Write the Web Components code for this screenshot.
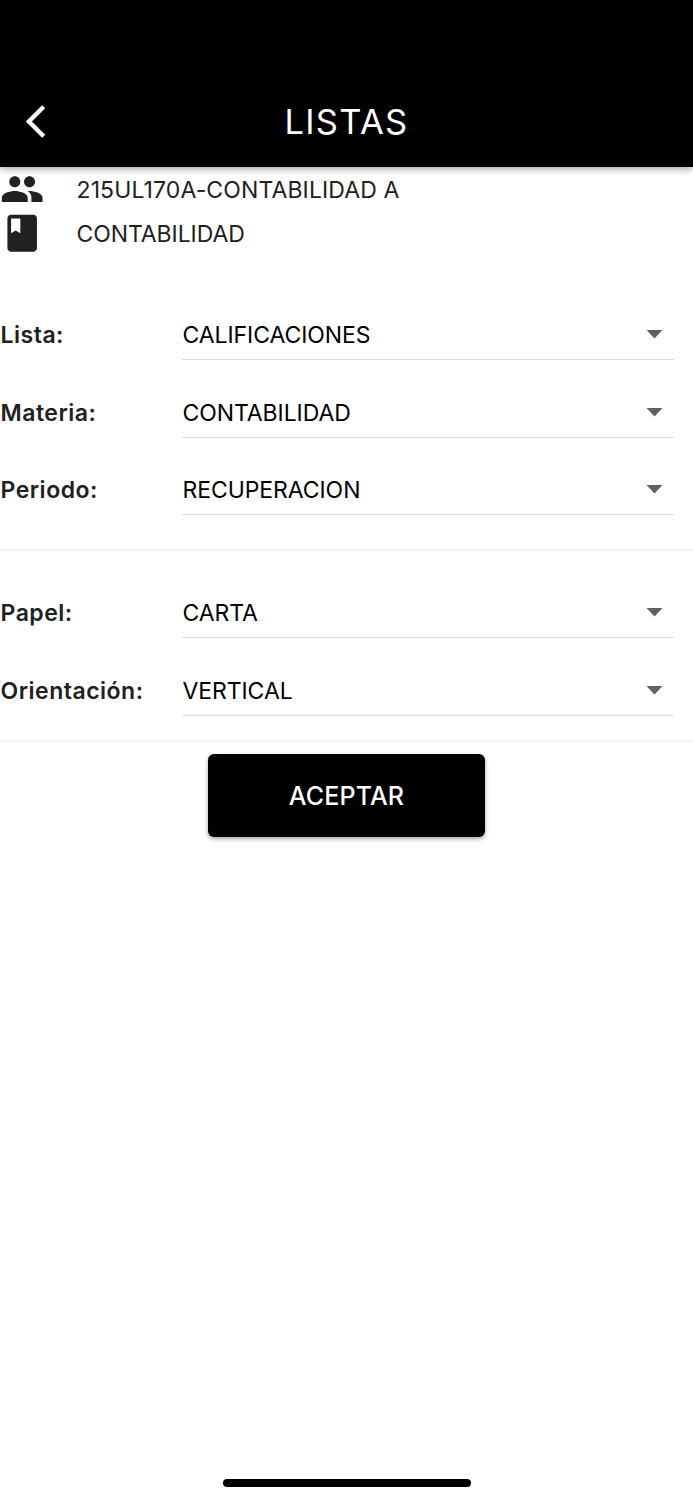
<!DOCTYPE html>
<html lang="es">
<head>
<meta charset="utf-8">
<title>Listas</title>
<style>
html,body{margin:0;height:100%}
body{font-family:Inter,"Liberation Sans",sans-serif;background:#fff;color:#212121}
</style>
</head>
<body>
<listas-page></listas-page>
<script>
const define = (name, html) => customElements.define(name, class extends HTMLElement {
  constructor() {
    super();
    const t = document.createElement('template');
    t.innerHTML = html;
    this.attachShadow({ mode: 'open' }).append(t.content.cloneNode(true));
  }
});

define('app-header', `<style>
:host{display:grid;grid-template-columns:1fr auto 1fr;align-items:center;box-sizing:border-box;height:167px;padding:76px 0 0;background:#000;color:#fff;box-shadow:0 2px 7px rgba(0,0,0,.38);position:relative}
svg{display:block;margin-left:26px;fill:#fff;stroke:#fff;stroke-width:.3}
h1{margin:0;font-size:34.5px;line-height:44px;font-weight:400;letter-spacing:1.3px}
</style>
<svg width="19.4" height="39" viewBox="0 0 11.94 24"><path d="M11.67 3.87 9.9 2.1 0 12l9.9 9.9 1.77-1.77L3.54 12z"/></svg>
<h1><slot></slot></h1>`);

define('info-row', `<style>
:host{display:grid;grid-template-columns:76.5px 1fr;align-items:center;height:43.5px;font-size:23px;line-height:30px;font-weight:400;letter-spacing:var(--tracking,-.08px)}
span{padding-top:2.4px}
::slotted(svg){display:block;width:44.35px;height:44.35px;fill:#212121}
</style>
<slot name="icon"></slot><span><slot></slot></span>`);

define('select-field', `<style>
:host{display:grid;grid-template-columns:182px 1fr;align-items:end;height:77.7px;padding-right:19px;font-size:23px;line-height:30px}
.label{padding:0 0 10px .5px;font-weight:600;letter-spacing:.5px}
.control{display:flex;align-items:center;justify-content:space-between;padding:0 11px 9px .5px;border-bottom:1px solid #dcdcdc;color:#000}
.value{font-weight:400;letter-spacing:-.08px}
svg{display:block;fill:#616161;margin-bottom:1px}
</style>
<span class="label"><slot name="label"></slot></span>
<div class="control"><span class="value"><slot></slot></span>
<svg width="17" height="9" viewBox="0 0 17 9"><path d="M.5 0h16l-8 8.4z"/></svg></div>`);

define('field-group', `<style>
:host{display:block;border-bottom:2px solid #f4f4f4}
</style><slot></slot>`);

define('accept-button', `<style>
:host{display:flex;justify-content:center}
button{font:500 25px/32px Inter,"Liberation Sans",sans-serif;letter-spacing:.15px;color:#fff;background:#000;border:0;border-radius:6px;width:277px;height:83px;padding:1px 0 0;box-shadow:0 2px 4px rgba(0,0,0,.36)}
</style><button type="button"><slot></slot></button>`);

define('home-indicator', `<style>
:host{display:block;width:248px;height:8px;border-radius:4px;background:#000}
</style>`);

define('listas-page', `<style>
:host{display:flex;flex-direction:column;height:1500px;background:#fff;overflow:hidden}
.info{display:block}
.wide{--tracking:.12px}
.first{padding-top:28.2px;padding-bottom:33.7px}
.second{padding-top:9.4px;padding-bottom:24.4px}
accept-button{margin-top:12px}
home-indicator{margin:auto auto 13px}
</style>
<app-header>LISTAS</app-header>
<div class="info">
<info-row class="wide"><svg slot="icon" viewBox="0 0 24 24"><path d="M16 11c1.66 0 2.99-1.34 2.99-3S17.66 5 16 5s-3 1.34-3 3 1.34 3 3 3zm-8 0c1.66 0 2.99-1.34 2.99-3S9.66 5 8 5 5 6.34 5 8s1.34 3 3 3zm0 2c-2.33 0-7 1.17-7 3.5V19h14v-2.5c0-2.33-4.67-3.5-7-3.5zm8 0c-.29 0-.62.02-.97.05 1.16.84 1.97 1.97 1.97 3.45V19h6v-2.5c0-2.33-4.67-3.5-7-3.5z"/></svg>215UL170A-CONTABILIDAD A</info-row>
<info-row><svg slot="icon" viewBox="0 0 24 24"><path d="M18 2H6c-1.1 0-2 .9-2 2v16c0 1.1.9 2 2 2h12c1.1 0 2-.9 2-2V4c0-1.1-.9-2-2-2zM6 4h5v8l-2.5-1.5L6 12V4z"/></svg>CONTABILIDAD</info-row>
</div>
<field-group class="first">
<select-field><span slot="label">Lista:</span>CALIFICACIONES</select-field>
<select-field><span slot="label">Materia:</span>CONTABILIDAD</select-field>
<select-field><span slot="label">Periodo:</span>RECUPERACION</select-field>
</field-group>
<field-group class="second">
<select-field><span slot="label">Papel:</span>CARTA</select-field>
<select-field><span slot="label">Orientación:</span>VERTICAL</select-field>
</field-group>
<accept-button>ACEPTAR</accept-button>
<home-indicator></home-indicator>`);
</script>
</body>
</html>
